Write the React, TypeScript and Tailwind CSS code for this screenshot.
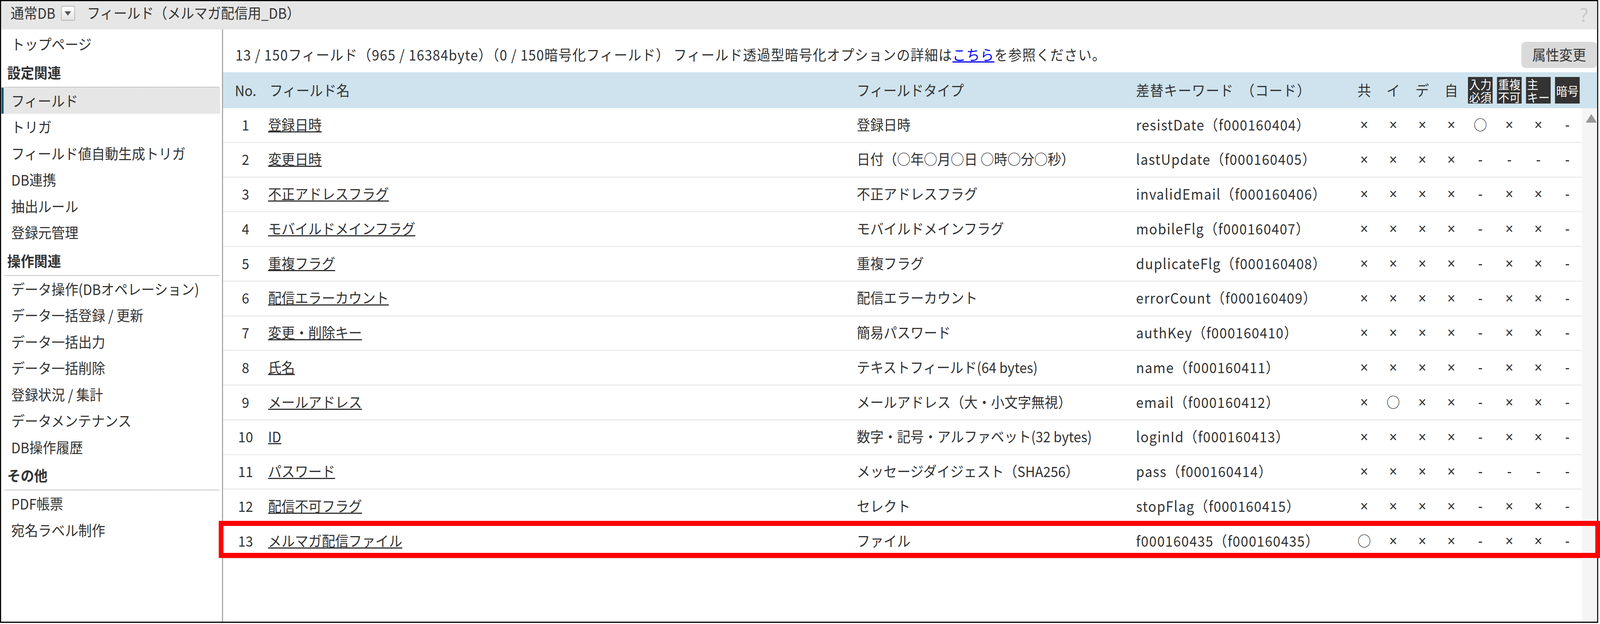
import React, { useLayoutEffect, useState } from "react";

type Row = { no: number; name: string; type: string; key: string; flags: string[] };

const X = "×";
const O = "○";
const D = "-";

const rows: Row[] = [
  { no: 1, name: "登録日時", type: "登録日時", key: "resistDate（f000160404）", flags: [X, X, X, X, O, X, X, D] },
  { no: 2, name: "変更日時", type: "日付（○年○月○日 ○時○分○秒）", key: "lastUpdate（f000160405）", flags: [X, X, X, X, D, D, D, D] },
  { no: 3, name: "不正アドレスフラグ", type: "不正アドレスフラグ", key: "invalidEmail（f000160406）", flags: [X, X, X, X, D, X, X, D] },
  { no: 4, name: "モバイルドメインフラグ", type: "モバイルドメインフラグ", key: "mobileFlg（f000160407）", flags: [X, X, X, X, D, X, X, D] },
  { no: 5, name: "重複フラグ", type: "重複フラグ", key: "duplicateFlg（f000160408）", flags: [X, X, X, X, D, X, X, D] },
  { no: 6, name: "配信エラーカウント", type: "配信エラーカウント", key: "errorCount（f000160409）", flags: [X, X, X, X, D, X, X, D] },
  { no: 7, name: "変更・削除キー", type: "簡易パスワード", key: "authKey（f000160410）", flags: [X, X, X, X, D, X, X, D] },
  { no: 8, name: "氏名", type: "テキストフィールド(64 bytes)", key: "name（f000160411）", flags: [X, X, X, X, D, X, X, D] },
  { no: 9, name: "メールアドレス", type: "メールアドレス（大・小文字無視）", key: "email（f000160412）", flags: [X, O, X, X, D, X, X, D] },
  { no: 10, name: "ID", type: "数字・記号・アルファベット(32 bytes)", key: "loginId（f000160413）", flags: [X, X, X, X, D, X, X, D] },
  { no: 11, name: "パスワード", type: "メッセージダイジェスト（SHA256）", key: "pass（f000160414）", flags: [X, X, X, X, D, D, D, D] },
  { no: 12, name: "配信不可フラグ", type: "セレクト", key: "stopFlag（f000160415）", flags: [X, X, X, X, D, X, X, D] },
  { no: 13, name: "メルマガ配信ファイル", type: "ファイル", key: "f000160435（f000160435）", flags: [O, X, X, X, D, X, X, D] },
];

function NavItem({ label, selected }: { label: string; selected?: boolean }) {
  if (selected) {
    return (
      <div className="h-[67.5px] flex items-center pl-[21px] bg-[#e6e6e6] border-l-[6px] border-[#0e5a74]">
        {label}
      </div>
    );
  }
  return <div className="h-[67.5px] flex items-center pl-[27px]">{label}</div>;
}

function NavHeading({ label }: { label: string }) {
  return (
    <div className="h-[77px] flex items-center pt-[3px] ml-[9px] mr-[3px] pl-[7px] font-bold border-b-2 border-dotted border-[#8c8c8c]">
      {label}
    </div>
  );
}

function FlagBox({ lines }: { lines: string[] }) {
  return (
    <div className="w-[68px] h-[68px] bg-[#333333] text-white text-[31px] flex flex-col justify-center px-[3px] text-left">
      {lines.map((l) => (
        <div key={l} className="h-[33px] leading-[33px] whitespace-nowrap">
          {l}
        </div>
      ))}
    </div>
  );
}

function Flag({ v }: { v: string }) {
  if (v === O) {
    return <div className="w-[80px] text-center">{v}</div>;
  }
  return <div className="w-[80px] text-center font-['Noto_Sans',sans-serif] text-[38px]">{v}</div>;
}

export default function App() {
  const [box, setBox] = useState<{ w: number; h: number }>(() =>
    typeof window !== "undefined"
      ? { w: window.innerWidth, h: window.innerHeight }
      : { w: 4411, h: 1597 }
  );
  useLayoutEffect(() => {
    const f = () => setBox({ w: window.innerWidth, h: window.innerHeight });
    f();
    window.addEventListener("resize", f);
    return () => window.removeEventListener("resize", f);
  }, []);
  const sx = box.w / 4411;
  const sy = box.h / 1597;

  return (
    <div className="overflow-hidden bg-white" style={{ width: box.w, height: box.h }}>
      <div
        style={{ transform: `scale(${sx}, ${sy})` }}
        className="origin-top-left relative w-[4411px] h-[1597px] bg-white font-['Noto_Sans_CJK_JP',sans-serif] text-[#333333] text-[37px]"
      >
        <div className="w-[4406px] h-[1594px] border-[3px] border-black flex flex-col overflow-hidden">
          {/* top bar */}
          <header className="h-[72px] shrink-0 bg-[#e6e6e6] flex items-start pt-[5px] pl-[26px] pr-[25px] leading-[48px]">
            <span>通常DB</span>
            <span className="ml-[15px] mt-[7px] w-[39px] h-[38px] border-2 border-[#b8b8b8] bg-linear-to-b from-white to-[#e4e4e4] rounded-[3px] flex items-center justify-center">
              <svg width="20" height="13" viewBox="0 0 20 13">
                <path d="M1 1 H19 L10 12 Z" fill="#555555" />
              </svg>
            </span>
            <span className="ml-[33px]">フィールド（メルマガ配信用_DB）</span>
            <span className="ml-auto -mt-[4px] h-[66px] text-[50px] leading-[66px] text-[#c8c8c8] font-['Noto_Sans',sans-serif]">?</span>
          </header>

          <div className="flex flex-1 min-h-0">
            {/* sidebar */}
            <aside className="w-[612px] shrink-0 border-r-[3px] border-[#a3a3a3] pt-[4px] pl-[1px] pr-[5px]">
              <NavItem label="トップページ" />
              <NavHeading label="設定関連" />
              <NavItem label="フィールド" selected />
              <NavItem label="トリガ" />
              <NavItem label="フィールド値自動生成トリガ" />
              <NavItem label="DB連携" />
              <NavItem label="抽出ルール" />
              <NavItem label="登録元管理" />
              <NavHeading label="操作関連" />
              <NavItem label="データ操作(DBオペレーション)" />
              <NavItem label="データ一括登録 / 更新" />
              <NavItem label="データ一括出力" />
              <NavItem label="データ一括削除" />
              <NavItem label="登録状況 / 集計" />
              <NavItem label="データメンテナンス" />
              <NavItem label="DB操作履歴" />
              <NavHeading label="その他" />
              <NavItem label="PDF帳票" />
              <NavItem label="宛名ラベル制作" />
            </aside>

            {/* main */}
            <main className="flex-1 flex flex-col min-w-0">
              <div className="h-[110px] shrink-0 flex items-center pt-[20px] pl-[34px]">
                <span className="whitespace-nowrap tracking-[1.5px]">
                  13 / 150フィールド（965 / 16384byte）（0 / 150暗号化フィールド） フィールド透過型暗号化オプションの詳細は
                  <a className="text-[#0000ee] underline">こちら</a>
                  を参照ください。
                </span>
                <button className="ml-auto w-[209px] h-[67px] rounded-[12px] bg-[#dadada] text-[#333333] text-[37px] flex items-center justify-center">
                  属性変更
                </button>
              </div>

              {/* table header */}
              <div className="h-[92px] shrink-0 bg-[#cee3ee] flex items-center">
                <div className="w-[124px] text-center">No.</div>
                <div className="w-[1623px] pl-[4px]">フィールド名</div>
                <div className="w-[770px]">フィールドタイプ</div>
                <div className="w-[589px] whitespace-nowrap tracking-[1.5px]">差替キーワード　（コード）</div>
                {["共", "イ", "デ", "自"].map((h) => (
                  <div key={h} className="w-[80px] text-center">
                    {h}
                  </div>
                ))}
                <div className="w-[80px] flex justify-center">
                  <FlagBox lines={["入力", "必須"]} />
                </div>
                <div className="w-[80px] flex justify-center">
                  <FlagBox lines={["重複", "不可"]} />
                </div>
                <div className="w-[80px] flex justify-center">
                  <FlagBox lines={["主", "キー"]} />
                </div>
                <div className="w-[80px] flex justify-center">
                  <FlagBox lines={["暗号"]} />
                </div>
              </div>

              {/* body */}
              <div className="flex flex-1 min-h-0">
                <div className="w-[3746px] shrink-0">
                  {rows.map((r) => (
                    <div key={r.no} className="h-[88.75px] border-b-[3px] border-[#ececec] flex items-center pb-[3px] whitespace-nowrap">
                      <div className="w-[124px] text-center">{r.no}</div>
                      <div className="w-[1623px]">
                        <span className="underline">{r.name}</span>
                      </div>
                      <div className="w-[770px]">{r.type}</div>
                      <div className="w-[589px] tracking-[1.7px]">{r.key}</div>
                      {r.flags.map((f, i) => (
                        <Flag key={i} v={f} />
                      ))}
                    </div>
                  ))}
                </div>
                <div className="flex-1 bg-[#f5f5f5] flex justify-end items-start pt-[13px]">
                  <svg width="32" height="25" viewBox="0 0 32 25">
                    <path d="M16 2 L30 22 Q31 24 29 24 H3 Q1 24 2 22 Z" fill="#999999" />
                  </svg>
                </div>
              </div>
            </main>
          </div>
        </div>

        {/* red highlight annotation */}
        <div className="absolute left-[603px] top-[1333px] w-[3808px] h-[95px] border-[13px] border-[#ff0000]" />
      </div>
    </div>
  );
}
